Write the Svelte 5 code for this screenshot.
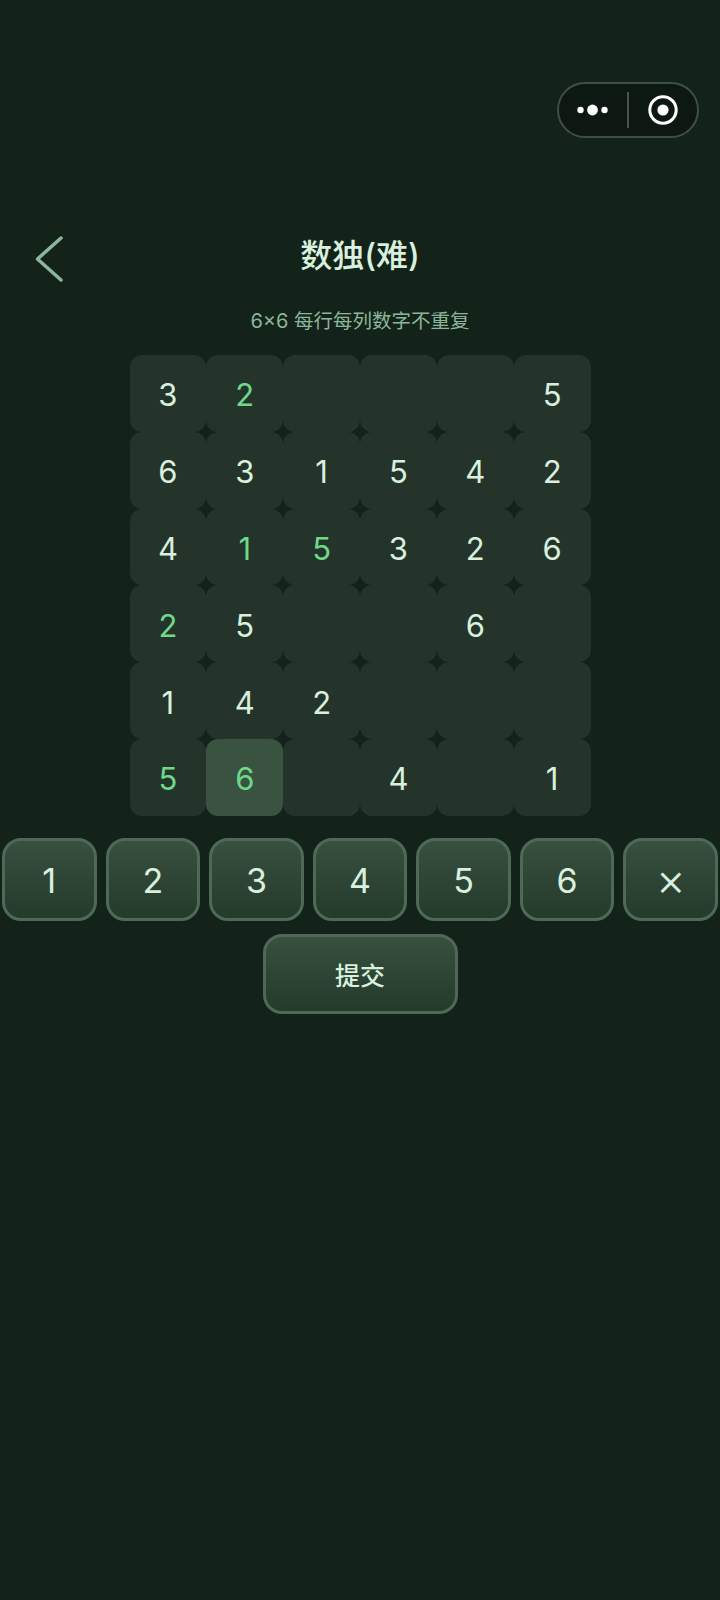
<script>
  const grid = [
    [['3'], ['2', 'u'], [''], [''], [''], ['5']],
    [['6'], ['3'], ['1'], ['5'], ['4'], ['2']],
    [['4'], ['1', 'u'], ['5', 'u'], ['3'], ['2'], ['6']],
    [['2', 'u'], ['5'], [''], [''], ['6'], ['']],
    [['1'], ['4'], ['2'], [''], [''], ['']],
    [['5', 'u'], ['6', 'us'], [''], ['4'], [''], ['1']]
  ];
  const keys = ['1', '2', '3', '4', '5', '6', '×'];
</script>

<div class="page">
  <div class="capsule-row">
    <div class="capsule">
      <svg class="dots" width="32" height="12" viewBox="0 0 32 12">
        <circle cx="3.5" cy="6" r="3.2" fill="#fff" />
        <circle cx="15.5" cy="6" r="5.4" fill="#fff" />
        <circle cx="27.5" cy="6" r="3.2" fill="#fff" />
      </svg>
      <span class="divider"></span>
      <svg class="target" width="32" height="32" viewBox="0 0 32 32">
        <circle cx="16" cy="16" r="13.2" fill="none" stroke="#fff" stroke-width="3" />
        <circle cx="16" cy="16" r="5.6" fill="#fff" />
      </svg>
    </div>
  </div>

  <header class="head">
    <svg class="back" width="28" height="46" viewBox="0 0 28 46">
      <path d="M26 2 L2.5 23 L26 44" fill="none" stroke="#8db59b" stroke-width="3.5" stroke-linecap="round" stroke-linejoin="round" />
    </svg>
    <h1>数独(难)</h1>
  </header>

  <p class="sub"><span class="size">6×6</span> 每行每列数字不重复</p>

  <div class="board">
    {#each grid as row}
      {#each row as cell}
        <div class="cell" class:user={cell[1]?.includes('u')} class:sel={cell[1]?.includes('s')}>{cell[0]}</div>
      {/each}
    {/each}
  </div>

  <div class="keys">
    {#each keys as k}
      <button class="key" class:clear={k === '×'}>{k}</button>
    {/each}
  </div>

  <button class="submit">提交</button>
</div>

<style>
  :global(body) {
    margin: 0;
    background: #13231a;
  }
  .page {
    min-height: 1600px;
    box-sizing: border-box;
    padding-top: 82px;
    display: flex;
    flex-direction: column;
    align-items: center;
    font-family: "Inter", "Noto Sans CJK SC", sans-serif;
    color: #d9f0df;
    background: #13231a;
  }
  .capsule-row {
    align-self: stretch;
    display: flex;
    justify-content: flex-end;
    padding-right: 21px;
  }
  .capsule {
    width: 142px;
    height: 56px;
    box-sizing: border-box;
    border: 2px solid #3f4e46;
    border-radius: 28px;
    background: #0e1813;
    display: flex;
    align-items: center;
    padding-left: 18px;
  }
  .dots { flex: none; }
  .divider {
    width: 1.5px;
    height: 36px;
    margin-left: 18px;
    margin-right: 18px;
    background: #47554d;
  }
  .target { flex: none; }
  .head {
    align-self: stretch;
    height: 46px;
    margin-top: 97px;
    position: relative;
    display: flex;
    justify-content: center;
    align-items: center;
  }
  .back {
    position: absolute;
    left: 35px;
    top: 1px;
  }
  h1 {
    margin: -4px 0 0;
    font-size: 32px;
    line-height: 40px;
    font-weight: 500;
    color: #d9f0df;
  }
  .sub {
    margin: 25px 0 0;
    height: 30px;
    font-size: 19.5px;
    line-height: 30px;
    color: #8db59b;
  }
  .size { font-size: 20px; }
  .board {
    margin-top: 19px;
    width: 461px;
    display: grid;
    grid-template-columns: repeat(6, 1fr);
    grid-auto-rows: 76.8px;
  }
  .cell {
    display: flex;
    align-items: center;
    justify-content: center;
    box-sizing: border-box;
    padding-top: 3px;
    border-radius: 12px;
    background: #24342a;
    font-size: 31px;
    font-weight: 400;
    color: #d9f0df;
  }
  .cell.user { color: #6fd98a; }
  .cell.sel { background: #3a5240; }
  .keys {
    align-self: stretch;
    margin-top: 22px;
    padding: 0 2px;
    display: grid;
    grid-template-columns: repeat(7, 1fr);
    gap: 9px;
  }
  .key, .submit {
    box-sizing: border-box;
    border: 3px solid #4e6957;
    border-radius: 19px;
    background: linear-gradient(180deg, #385040 0%, #243a2b 100%);
    color: #d9f0df;
    font-family: inherit;
    padding: 0;
  }
  .key {
    height: 83px;
    padding-top: 3px;
    font-size: 34px;
    font-weight: 400;
  }
  .key.clear {
    padding-top: 0;
    font-size: 46px;
    font-weight: 300;
    line-height: 1;
  }
  .submit {
    margin-top: 13px;
    width: 195px;
    height: 80px;
    font-size: 25px;
    font-weight: 500;
  }
</style>
